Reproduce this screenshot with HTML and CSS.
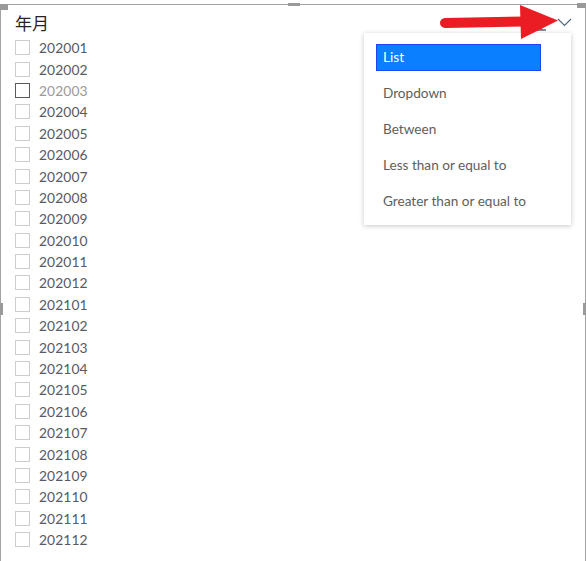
FILE: index.html
```html
<!DOCTYPE html>
<html>
<head>
<meta charset="utf-8">
<link rel="stylesheet" href="styles.css">
</head>
<body>
<div class="visual">
  <span class="handle corner-tl"></span>
  <span class="handle corner-tr"></span>
  <span class="handle top-mid"></span>
  <span class="handle left-mid"></span>
  <span class="handle right-mid"></span>

  <div class="title">年月</div>
  <ul class="list">
    <li class="row"><span class="box"></span>202001</li>
    <li class="row"><span class="box"></span>202002</li>
    <li class="row hover"><span class="box"></span>202003</li>
    <li class="row"><span class="box"></span>202004</li>
    <li class="row"><span class="box"></span>202005</li>
    <li class="row"><span class="box"></span>202006</li>
    <li class="row"><span class="box"></span>202007</li>
    <li class="row"><span class="box"></span>202008</li>
    <li class="row"><span class="box"></span>202009</li>
    <li class="row"><span class="box"></span>202010</li>
    <li class="row"><span class="box"></span>202011</li>
    <li class="row"><span class="box"></span>202012</li>
    <li class="row"><span class="box"></span>202101</li>
    <li class="row"><span class="box"></span>202102</li>
    <li class="row"><span class="box"></span>202103</li>
    <li class="row"><span class="box"></span>202104</li>
    <li class="row"><span class="box"></span>202105</li>
    <li class="row"><span class="box"></span>202106</li>
    <li class="row"><span class="box"></span>202107</li>
    <li class="row"><span class="box"></span>202108</li>
    <li class="row"><span class="box"></span>202109</li>
    <li class="row"><span class="box"></span>202110</li>
    <li class="row"><span class="box"></span>202111</li>
    <li class="row"><span class="box"></span>202112</li>
  </ul>

  <svg class="header-icons" width="586" height="45" viewBox="0 0 586 45">
    <path d="M537 30 H546 M541.5 27 V30" stroke="#5f6b78" stroke-width="1.5" fill="none"/>
    <path d="M558 19 L564.5 25.5 L571 19" stroke="#55687c" stroke-width="1.2" fill="none"/>
  </svg>

  <div class="menu">
    <div class="item selected"><span>List</span></div>
    <div class="item"><span>Dropdown</span></div>
    <div class="item"><span>Between</span></div>
    <div class="item"><span>Less than or equal to</span></div>
    <div class="item"><span>Greater than or equal to</span></div>
  </div>

  <svg class="arrow" width="586" height="45" viewBox="0 0 586 45">
    <line x1="445" y1="23" x2="526" y2="21.5" stroke="#ea1c24" stroke-width="10" stroke-linecap="round"/>
    <polygon points="520,5 558,20.5 521,39" fill="#ea1c24"/>
  </svg>
</div>
</body>
</html>
```
FILE: styles.css
```css
html, body {
  margin: 0;
  padding: 0;
  background: #ffffff;
  overflow: hidden;
}

.visual {
  position: relative;
  box-sizing: border-box;
  width: 586px;
  height: 557px;
  margin-top: 4px;
  border-top: 1px solid #a3a3a3;
  border-left: 1px solid #a3a3a3;
  border-right: 1px solid #a3a3a3;
  padding: 6px 0 0 14px;
  font-family: "Segoe UI", Lato, "Liberation Sans", sans-serif;
}

.handle {
  position: absolute;
  background: #9a9a9a;
}
.corner-tl {
  left: -1px;
  top: -1px;
  width: 8px;
  height: 6px;
}
.corner-tr {
  right: -1px;
  top: -2px;
  width: 9px;
  height: 5px;
}
.top-mid {
  left: 287px;
  top: -2px;
  width: 12px;
  height: 3px;
}
.left-mid {
  left: -1px;
  top: 298px;
  width: 3px;
  height: 12px;
}
.right-mid {
  right: -1px;
  top: 298px;
  width: 3px;
  height: 12px;
}

.title {
  font-family: "Noto Sans CJK SC", sans-serif;
  font-size: 17px;
  line-height: 24px;
  color: #252423;
  height: 24px;
}

.list {
  list-style: none;
  margin: 2px 0 0 0;
  padding: 0;
}

.row {
  display: flex;
  align-items: center;
  height: 21.4px;
  font-size: 13.8px;
  color: #565a66;
  letter-spacing: 0.1px;
}

.box {
  box-sizing: border-box;
  width: 15px;
  height: 15px;
  border: 1px solid #cdcdcd;
  margin-right: 9px;
  flex: none;
}

.row.hover {
  color: #9a9a9a;
}
.row.hover .box {
  border-color: #5b5b5b;
}

.header-icons {
  position: absolute;
  left: -1px;
  top: -5px;
}

.arrow {
  position: absolute;
  left: -1px;
  top: -5px;
}

.menu {
  position: absolute;
  left: 363px;
  top: 28px;
  width: 207px;
  box-sizing: border-box;
  padding: 6px 12px;
  background: #ffffff;
  box-shadow: 0 1px 5px rgba(0, 0, 0, 0.22);
}

.item {
  height: 36px;
  display: flex;
  align-items: center;
  font-size: 13.6px;
  color: #605e5c;
}
.item span {
  box-sizing: border-box;
  width: 165px;
  height: 27px;
  line-height: 25px;
  padding-left: 6px;
  border: 1px solid transparent;
}
.item.selected span {
  background: #0a7fff;
  border-color: #1d45f0;
  color: #ffffff;
}
```
